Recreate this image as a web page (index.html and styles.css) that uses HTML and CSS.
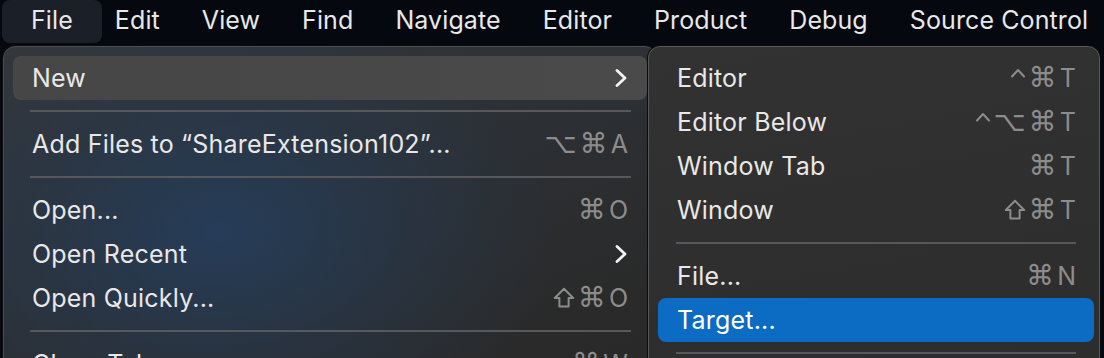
FILE: index.html
```html
<!DOCTYPE html>
<html lang="en">
<head>
    <meta charset="UTF-8">
    <title>Xcode – File menu</title>
    <link rel="stylesheet" href="styles.css">
</head>
<body>
    <div class="menubar">
        <span class="menubar-item active">File</span>
        <span class="menubar-item">Edit</span>
        <span class="menubar-item">View</span>
        <span class="menubar-item">Find</span>
        <span class="menubar-item">Navigate</span>
        <span class="menubar-item">Editor</span>
        <span class="menubar-item">Product</span>
        <span class="menubar-item">Debug</span>
        <span class="menubar-item">Source Control</span>
    </div>

    <div class="stage">
        <div class="menu file-menu">
            <div class="menu-row hover">
                <span>New</span>
                <svg class="chevron" width="12" height="18" viewBox="0 0 12 18"><polyline points="2,1.5 10,9 2,16.5" fill="none" stroke="#f2f2f2" stroke-width="2.8" stroke-linecap="round" stroke-linejoin="round"/></svg>
            </div>
            <div class="separator"></div>
            <div class="menu-row">
                <span>Add Files to “ShareExtension102”...</span>
                <span class="shortcut"><span class="mod">⌥</span><span class="mod">⌘</span>A</span>
            </div>
            <div class="separator"></div>
            <div class="menu-row">
                <span>Open...</span>
                <span class="shortcut"><span class="mod">⌘</span>O</span>
            </div>
            <div class="menu-row">
                <span>Open Recent</span>
                <svg class="chevron" width="12" height="18" viewBox="0 0 12 18"><polyline points="2,1.5 10,9 2,16.5" fill="none" stroke="#f2f2f2" stroke-width="2.8" stroke-linecap="round" stroke-linejoin="round"/></svg>
            </div>
            <div class="menu-row">
                <span>Open Quickly...</span>
                <span class="shortcut"><svg class="key-shift" width="22" height="21" viewBox="0 0 22 21"><path d="M11 1.8 L20.2 11 H15.6 V19.6 H6.4 V11 H1.8 Z" fill="none" stroke="#8c8c8c" stroke-width="2" stroke-linejoin="round"/></svg><span class="mod">⌘</span>O</span>
            </div>
            <div class="separator"></div>
            <div class="menu-row">
                <span>Close Tab</span>
                <span class="shortcut"><span class="mod">⌘</span>W</span>
            </div>
        </div>

        <div class="menu submenu">
            <div class="menu-row">
                <span>Editor</span>
                <span class="shortcut"><svg class="key-ctrl" width="16" height="10" viewBox="0 0 16 10"><polyline points="2,8.5 8,2 14,8.5" fill="none" stroke="#8c8c8c" stroke-width="2" stroke-linecap="round" stroke-linejoin="round"/></svg><span class="mod">⌘</span>T</span>
            </div>
            <div class="menu-row">
                <span>Editor Below</span>
                <span class="shortcut"><svg class="key-ctrl" width="16" height="10" viewBox="0 0 16 10"><polyline points="2,8.5 8,2 14,8.5" fill="none" stroke="#8c8c8c" stroke-width="2" stroke-linecap="round" stroke-linejoin="round"/></svg><span class="mod">⌥</span><span class="mod">⌘</span>T</span>
            </div>
            <div class="menu-row">
                <span>Window Tab</span>
                <span class="shortcut"><span class="mod">⌘</span>T</span>
            </div>
            <div class="menu-row">
                <span>Window</span>
                <span class="shortcut"><svg class="key-shift" width="22" height="21" viewBox="0 0 22 21"><path d="M11 1.8 L20.2 11 H15.6 V19.6 H6.4 V11 H1.8 Z" fill="none" stroke="#8c8c8c" stroke-width="2" stroke-linejoin="round"/></svg><span class="mod">⌘</span>T</span>
            </div>
            <div class="separator"></div>
            <div class="menu-row">
                <span>File...</span>
                <span class="shortcut"><span class="mod">⌘</span>N</span>
            </div>
            <div class="menu-row selected">
                <span>Target...</span>
            </div>
            <div class="separator"></div>
        </div>
    </div>
</body>
</html>
```

FILE: styles.css
```css
body {
    margin: 0;
    background-color: #05080f;
    font-family: 'Inter', 'DejaVu Sans', sans-serif;
    color: #e8e8e8;
    overflow: hidden;
    height: 358px;
}

/* Menüleiste oben */
.menubar {
    display: flex;
    align-items: center;
    height: 44px;
    padding-left: 10px;
    font-size: 25px;
    letter-spacing: 0.1px;
    white-space: nowrap;
}
.menubar-item {
    flex-shrink: 0;
    padding: 0 21px;
    line-height: 41px;
    margin-bottom: 3px;
    position: relative;
}
.menubar-item.active::before {
    content: '';
    position: absolute;
    top: 0;
    bottom: -2px;
    left: -8px;
    right: -8px;
    background-color: #1a1f28;
    border-radius: 8px;
    z-index: -1;
}

.stage {
    position: relative;
    padding-top: 2px;
}

/* Dropdown-Menüs */
.menu {
    font-size: 25px;
    letter-spacing: 0.2px;
    border-radius: 12px;
    padding: 9px 0;
    box-sizing: border-box;
}
.file-menu {
    width: 654px;
    margin-left: 3px;
    height: 400px;
    border: 1px solid #4a4c50;
    box-shadow: 0 0 0 1px #0c0d10;
    background:
        radial-gradient(ellipse 340px 240px at 215px 185px, rgba(37, 61, 90, 0.95), rgba(38, 58, 82, 0.45) 55%, rgba(40, 44, 50, 0) 100%),
        linear-gradient(160deg, #34373b 0%, #2c2f33 45%, #2a2a2a 75%, #282828 100%);
}
.submenu {
    position: absolute;
    top: 2px;
    left: 648px;
    width: 452px;
    height: 400px;
    border: 1px solid #55575a;
    box-shadow: 0 0 0 1px #0b0c0e;
    background: linear-gradient(170deg, #323232 0%, #2e2e2e 60%, #2c2c2c 100%);
}

.menu-row {
    display: flex;
    justify-content: space-between;
    align-items: center;
    height: 44px;
    padding: 0 19px;
    margin: 0 9px;
    border-radius: 8px;
    white-space: nowrap;
}
.submenu .menu-row {
    margin: 0 5px 0 9px;
    padding: 0 18px 0 19px;
}
.menu-row.hover {
    background: linear-gradient(90deg, #464646, #4a4a4a);
}
.menu-row.selected {
    background-color: #0c6bc3;
    color: #fff;
}
.chevron {
    margin-right: 1px;
}

/* Tastenkürzel rechts */
.shortcut {
    color: #8c8c8c;
    font-size: 25px;
    letter-spacing: 0;
    white-space: nowrap;
}
.shortcut > .mod,
.shortcut > svg {
    margin-right: 3px;
}
.mod {
    font-family: 'DejaVu Sans', sans-serif;
    font-size: 28px;
    line-height: 1;
}
.key-shift {
    vertical-align: -1px;
}
.key-ctrl {
    vertical-align: 9px;
}

.separator {
    height: 2px;
    background-color: #56585b;
    margin: 10px 25px 10px 26px;
}
.submenu .separator {
    margin: 10px 23px 10px 27px;
}
```
